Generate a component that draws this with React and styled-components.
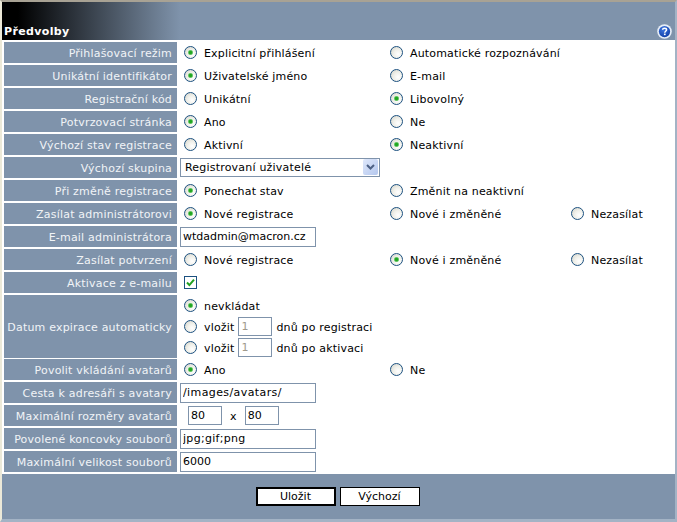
import React from "react";
import styled, { createGlobalStyle } from "styled-components";

const GlobalStyle = createGlobalStyle`
  html, body {
    margin: 0;
    padding: 0;
    background: #ffffff;
  }
  body {
    font-family: "DejaVu Sans", Verdana, sans-serif;
    font-size: 11px;
    color: #000000;
  }
`;

const Window = styled.div`
  width: 677px;
  height: 522px;
  box-sizing: border-box;
  display: flex;
  flex-direction: column;
  background: #ffffff;
  border-top: 2px solid #a8a294;
  border-left: 2px solid #ece9d8;
  border-right: 2px solid #a3b3c5;
  border-bottom: 3px solid #a3b3c5;
`;

const Header = styled.div`
  height: 38px;
  flex: none;
  display: flex;
  align-items: flex-end;
  justify-content: space-between;
  padding: 0 3px 1px 2px;
  box-sizing: border-box;
  background: linear-gradient(90deg, #000000 0, #000000 16px, #7f93ab 178px);
`;

const Title = styled.h1`
  margin: 0;
  font-size: 11px;
  line-height: 14px;
  font-weight: bold;
  letter-spacing: 0.35px;
  color: #ffffff;
`;

const Form = styled.form`
  flex: 1;
  display: flex;
  flex-direction: column;
  gap: 2px;
  padding: 2px 0 2px 2px;
`;

const Row = styled.div`
  display: grid;
  grid-template-columns: 173px 1fr;
  height: ${(props) => props.height || 21}px;
`;

const Label = styled.label`
  background: #7f93ab;
  color: #f1f4f7;
  padding: 1px 5px 0 0;
  letter-spacing: 0.2px;
  display: flex;
  align-items: center;
  justify-content: flex-end;
  white-space: nowrap;
`;

const Options = styled.div`
  display: grid;
  grid-template-columns: 206px 181px 1fr;
  align-items: center;
  padding-left: 7px;
`;

const Stack = styled.div`
  display: flex;
  flex-direction: column;
  justify-content: center;
  padding-left: 7px;
`;

const StackLine = styled.div`
  height: 21px;
  display: flex;
  align-items: center;
`;

const Option = styled.label`
  display: flex;
  align-items: center;
  gap: 7px;
  padding-top: 2px;
  letter-spacing: 0.17px;
  white-space: nowrap;
`;

const Radio = styled.input.attrs({ type: "radio" })`
  appearance: none;
  width: 13px;
  height: 13px;
  margin: 0 0 2px 0;
  flex: none;
  border-radius: 50%;
  border: 1px solid #1c5180;
  box-sizing: border-box;
  background: radial-gradient(circle at 65% 65%, #ffffff 0, #f0f0ea 45%, #d0d0c6 100%);

  &:checked {
    background:
      radial-gradient(circle, #21a621 0, #21a621 1.3px, #8ed68e 2.4px, transparent 3px),
      radial-gradient(circle at 65% 65%, #ffffff 0, #f0f0ea 45%, #d0d0c6 100%);
  }
`;

const FieldCell = styled.div`
  display: flex;
  align-items: center;
  padding-left: ${(props) => props.inset || 3}px;
`;

const TextInput = styled.input.attrs({ type: "text" })`
  width: 136px;
  height: 20px;
  box-sizing: border-box;
  margin: 0;
  padding: 0 2px;
  border: 1px solid #7f93ab;
  background: #ffffff;
  color: ${(props) => (props.disabled ? "#a09a8c" : "#000000")};
  font-family: inherit;
  font-size: 11px;
  letter-spacing: ${(props) => props.$spacing || 0}px;
`;

const SelectWrap = styled.div`
  position: relative;
  width: 200px;
  height: 19px;
`;

const Select = styled.select`
  appearance: none;
  width: 100%;
  height: 100%;
  box-sizing: border-box;
  margin: 0;
  padding: 0 0 0 4px;
  border: 1px solid #7f93ab;
  border-radius: 0;
  background: #ffffff;
  color: #000000;
  font-family: inherit;
  font-size: 11px;
  letter-spacing: 0.2px;
`;

const SelectArrow = styled.span`
  position: absolute;
  top: 1px;
  right: 2px;
  width: 15px;
  height: 16px;
  border-radius: 2px;
  background: linear-gradient(135deg, #dfe8fb, #b4c7ee);
  display: flex;
  align-items: center;
  justify-content: center;
  pointer-events: none;
`;

const CheckBox = styled.span`
  width: 13px;
  height: 13px;
  box-sizing: border-box;
  border: 1px solid #1c5180;
  background: #ffffff;
  display: flex;
  align-items: center;
  justify-content: center;
`;

const InlineText = styled.span`
  margin-left: ${(props) => props.left || 0}px;
  margin-right: ${(props) => props.right || 0}px;
  padding-top: 1px;
  letter-spacing: 0.17px;
  white-space: nowrap;
`;

const SmallInput = styled(TextInput)`
  width: 34px;
  height: 19px;
  margin-left: ${(props) => props.$left || 0}px;
`;

const Footer = styled.div`
  flex: none;
  height: 45px;
  background: #7f93ab;
  display: flex;
  justify-content: center;
  align-items: flex-start;
  gap: 4px;
  padding: 13px 2px 0 0;
  box-sizing: border-box;
`;

const Button = styled.button`
  width: 80px;
  height: 19px;
  box-sizing: border-box;
  margin: 0;
  padding: 0;
  background: #ffffff;
  border: ${(props) => (props.$primary ? "2px" : "1px")} solid #000000;
  color: #000000;
  font-family: inherit;
  font-size: 11px;
`;

const HelpIcon = () => (
  <svg width="15" height="15" viewBox="0 0 16 16">
    <defs>
      <radialGradient id="helpFill" cx="40%" cy="30%" r="75%">
        <stop offset="0" stopColor="#3f78e0" />
        <stop offset="1" stopColor="#0f3ea8" />
      </radialGradient>
    </defs>
    <circle cx="8" cy="8" r="7.8" fill="#e6edf6" />
    <circle cx="8" cy="8" r="6" fill="url(#helpFill)" />
    <path d="M5.9 6.2C6 4.9 7 4.4 8.1 4.4c1.2 0 2.1.7 2.1 1.8 0 1.5-1.9 1.5-1.9 3" fill="none" stroke="#ffffff" strokeWidth="1.6" />
    <rect x="7.4" y="10.2" width="1.8" height="1.7" fill="#ffffff" />
  </svg>
);

const ArrowIcon = () => (
  <svg width="9" height="7" viewBox="0 0 9 7">
    <path d="M1 1l3.5 3.5L8 1" fill="none" stroke="#4d6185" strokeWidth="2" />
  </svg>
);

const CheckIcon = () => (
  <svg width="11" height="11" viewBox="0 0 11 11">
    <path d="M2 5.5l2.4 2.6L9 2.6" fill="none" stroke="#21a121" strokeWidth="2" />
  </svg>
);

const radioRows = {
  mode: ["Přihlašovací režim", ["Explicitní přihlášení", "Automatické rozpoznávání"], 0],
  ident: ["Unikátní identifikátor", ["Uživatelské jméno", "E-mail"], 0],
  code: ["Registrační kód", ["Unikátní", "Libovolný"], 1],
  confirm: ["Potvrzovací stránka", ["Ano", "Ne"], 0],
  state: ["Výchozí stav registrace", ["Aktivní", "Neaktivní"], 1],
  change: ["Při změně registrace", ["Ponechat stav", "Změnit na neaktivní"], 0],
  admin: ["Zasílat administrátorovi", ["Nové registrace", "Nové i změněné", "Nezasílat"], 0],
  send: ["Zasílat potvrzení", ["Nové registrace", "Nové i změněné", "Nezasílat"], 1],
  avatars: ["Povolit vkládání avatarů", ["Ano", "Ne"], 0],
};

const RadioRow = ({ name }) => {
  const [label, items, checked] = radioRows[name];
  return (
    <Row>
      <Label>{label}</Label>
      <Options>
        {items.map((item, i) => (
          <Option key={item}>
            <Radio name={name} defaultChecked={i === checked} />
            {item}
          </Option>
        ))}
      </Options>
    </Row>
  );
};

const InputRow = ({ label, value, spacing }) => (
  <Row>
    <Label>{label}</Label>
    <FieldCell>
      <TextInput defaultValue={value} $spacing={spacing} />
    </FieldCell>
  </Row>
);

const App = () => (
  <>
    <GlobalStyle />
    <Window>
      <Header>
        <Title>Předvolby</Title>
        <HelpIcon />
      </Header>
      <Form>
        <RadioRow name="mode" />
        <RadioRow name="ident" />
        <RadioRow name="code" />
        <RadioRow name="confirm" />
        <RadioRow name="state" />
        <Row>
          <Label>Výchozí skupina</Label>
          <FieldCell>
            <SelectWrap>
              <Select defaultValue="reg">
                <option value="reg">Registrovaní uživatelé</option>
              </Select>
              <SelectArrow>
                <ArrowIcon />
              </SelectArrow>
            </SelectWrap>
          </FieldCell>
        </Row>
        <RadioRow name="change" />
        <RadioRow name="admin" />
        <InputRow label="E-mail administrátora" value="wtdadmin@macron.cz" />
        <RadioRow name="send" />
        <Row>
          <Label>Aktivace z e-mailu</Label>
          <FieldCell inset={7}>
            <CheckBox>
              <CheckIcon />
            </CheckBox>
          </FieldCell>
        </Row>
        <Row height={62}>
          <Label>Datum expirace automaticky</Label>
          <Stack>
            <StackLine>
              <Option>
                <Radio name="expire" defaultChecked />
                nevkládat
              </Option>
            </StackLine>
            <StackLine>
              <Option>
                <Radio name="expire" />
                vložit
              </Option>
              <SmallInput defaultValue="1" disabled $left={4} />
              <InlineText left={4}>dnů po registraci</InlineText>
            </StackLine>
            <StackLine>
              <Option>
                <Radio name="expire" />
                vložit
              </Option>
              <SmallInput defaultValue="1" disabled $left={4} />
              <InlineText left={4}>dnů po aktivaci</InlineText>
            </StackLine>
          </Stack>
        </Row>
        <RadioRow name="avatars" />
        <InputRow label="Cesta k adresáři s avatary" value="/images/avatars/" spacing={0.4} />
        <Row>
          <Label>Maximální rozměry avatarů</Label>
          <FieldCell inset={11}>
            <SmallInput defaultValue="80" />
            <InlineText left={8} right={8}>x</InlineText>
            <SmallInput defaultValue="80" />
          </FieldCell>
        </Row>
        <InputRow label="Povolené koncovky souborů" value="jpg;gif;png" spacing={0.3} />
        <InputRow label="Maximální velikost souborů" value="6000" />
      </Form>
      <Footer>
        <Button $primary type="button">Uložit</Button>
        <Button type="button">Výchozí</Button>
      </Footer>
    </Window>
  </>
);

export default App;
